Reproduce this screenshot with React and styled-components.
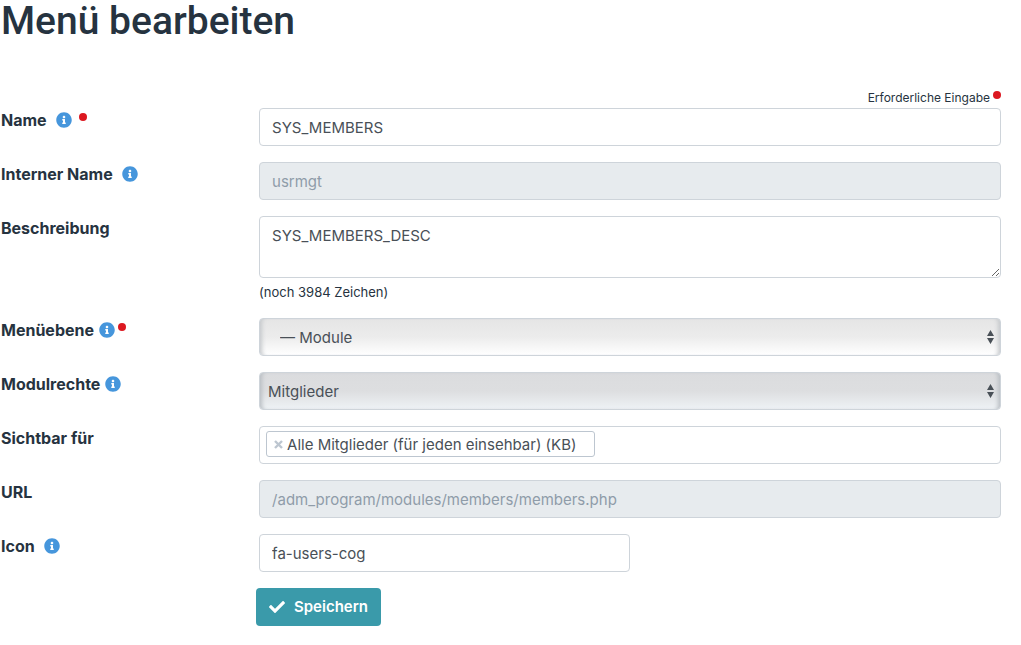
import React, { useState } from "react";
import styled, { createGlobalStyle } from "styled-components";
import { FaCheck, FaInfoCircle } from "react-icons/fa";

const GlobalStyle = createGlobalStyle`
  *, *::before, *::after { box-sizing: border-box; }
  body {
    margin: 0;
    background: #fff;
    color: #263340;
    font-family: Inter, "Liberation Sans", sans-serif;
    font-size: 15px;
    line-height: 24px;
  }
  input, select, textarea, button { font: inherit; }
`;

const Page = styled.main`
  padding: 0 20px 20px 1px;
`;

const Title = styled.h1`
  margin: 0 0 46px;
  font-family: Roboto, "Liberation Sans", sans-serif;
  font-size: 39px;
  font-weight: 500;
  line-height: 42px;
`;

const Form = styled.form`
  display: flex;
  flex-direction: column;
  gap: 16px;
`;

const Legend = styled.div`
  display: flex;
  justify-content: flex-end;
  align-items: center;
  gap: 3px;
  margin-bottom: -16px;
  font-size: 12px;
  line-height: 20px;
`;

const Dot = styled.span`
  flex: none;
  width: 8px;
  height: 8px;
  margin-bottom: 6px;
  border-radius: 50%;
  background: #dc1820;
`;

const Row = styled.div`
  display: grid;
  grid-template-columns: 8fr 23fr;
  align-items: start;
`;

const LabelCell = styled.div`
  display: flex;
  align-items: center;
  height: 24px;
`;

const Label = styled.label`
  font-size: 16px;
  font-weight: 700;
`;

const InfoIcon = styled(FaInfoCircle)`
  width: 16px;
  height: 16px;
  margin-left: ${(p) => (p.$tight ? 5 : 9)}px;
  margin-right: ${(p) => (p.$tight ? 3 : 7)}px;
  color: #4696dc;
`;

const Input = styled.input`
  display: block;
  width: ${(p) => (p.$half ? "50%" : "100%")};
  height: 38px;
  padding: 6px 12px;
  border: 1px solid #ced4da;
  border-radius: 4px;
  background: #fff;
  color: #495057;
  outline: 0;

  &:disabled {
    background: #e7ebee;
    color: #8f9ca9;
  }
`;

const TextArea = styled.textarea`
  display: block;
  width: 100%;
  height: 62px;
  padding: 7px 12px;
  border: 1px solid #ced4da;
  border-radius: 4px;
  background: #fff;
  color: #495057;
  resize: vertical;
  outline: 0;
`;

const Counter = styled.div`
  padding-top: 4px;
  font-size: 13px;
  line-height: 20px;
`;

const SelectWrap = styled.div`
  position: relative;
`;

const Select = styled.select`
  display: block;
  appearance: none;
  width: 100%;
  height: 38px;
  padding: 2px 24px 0 ${(p) => (p.$indent ? 20 : 8)}px;
  border: 1px solid #ced4da;
  border-radius: 4px;
  background: ${(p) =>
    p.$shaded
      ? "linear-gradient(#dbdcde 0%, #dddee0 50%, #eef2f5 100%)"
      : "linear-gradient(#e5e5e5 0%, #ececec 50%, #ffffff 100%)"};
  box-shadow: ${(p) =>
    p.$shaded
      ? "inset 5px 0 4px -3px #b9bec3, inset -5px 0 4px -3px #b9bec3"
      : "inset 5px 0 4px -3px #c6c9cc, inset -5px 0 4px -3px #c6c9cc"};
  color: #495057;
  outline: 0;
`;

const Arrows = styled.svg`
  position: absolute;
  top: 12px;
  right: 7px;
  width: 7px;
  height: 14px;
  pointer-events: none;
  fill: #495057;
`;

const TagBox = styled.div`
  display: flex;
  align-items: flex-start;
  height: 38px;
  padding: 4px 6px;
  border: 1px solid #ced4da;
  border-radius: 4px;
`;

const Tag = styled.div`
  display: flex;
  align-items: center;
  gap: 4px;
  height: 26px;
  padding: 1px 18px 0 7px;
  border: 1px solid #bdc6d0;
  border-radius: 3px;
  color: #495057;
`;

const RemoveButton = styled.button`
  display: flex;
  padding: 0;
  border: 0;
  background: none;
  color: #bdc6d0;

  svg {
    width: 9px;
    height: 9px;
  }
`;

const Actions = styled.div`
  padding-left: 25.5%;
`;

const SaveButton = styled.button`
  display: flex;
  align-items: center;
  gap: 9px;
  height: 38px;
  padding: 0 13px;
  border: 0;
  border-radius: 4px;
  background: #3a9aaa;
  color: #fff;
  font-weight: 600;

  svg {
    width: 16px;
    height: 16px;
  }
`;

function Field({ id, label, info, tight, required, children }) {
  return (
    <Row>
      <LabelCell>
        <Label htmlFor={id}>{label}</Label>
        {info && <InfoIcon $tight={tight} aria-hidden="true" />}
        {required && <Dot />}
      </LabelCell>
      <div>{children}</div>
    </Row>
  );
}

function SelectField({ id, option, indent, shaded }) {
  return (
    <SelectWrap>
      <Select id={id} $indent={indent} $shaded={shaded}>
        <option>{option}</option>
      </Select>
      <Arrows viewBox="0 0 7 14" aria-hidden="true">
        <path d="M3.5 0L7 6H0zM3.5 14L0 8h7z" />
      </Arrows>
    </SelectWrap>
  );
}

export default function App() {
  const [name, setName] = useState("SYS_MEMBERS");
  const [description, setDescription] = useState("SYS_MEMBERS_DESC");
  const [icon, setIcon] = useState("fa-users-cog");

  return (
    <>
      <GlobalStyle />
      <Page>
        <Title>Menü bearbeiten</Title>
        <Form onSubmit={(e) => e.preventDefault()}>
          <Legend>
            Erforderliche Eingabe
            <Dot />
          </Legend>
          <Field id="name" label="Name" info required>
            <Input id="name" value={name} onChange={(e) => setName(e.target.value)} />
          </Field>
          <Field id="internal" label="Interner Name" info>
            <Input id="internal" value="usrmgt" disabled />
          </Field>
          <Field id="description" label="Beschreibung">
            <TextArea
              id="description"
              value={description}
              onChange={(e) => setDescription(e.target.value)}
            />
            <Counter>(noch {4000 - description.length} Zeichen)</Counter>
          </Field>
          <Field id="level" label="Menüebene" info tight required>
            <SelectField id="level" option="— Module" indent />
          </Field>
          <Field id="rights" label="Modulrechte" info tight>
            <SelectField id="rights" option="Mitglieder" shaded />
          </Field>
          <Field id="visible" label="Sichtbar für">
            <TagBox>
              <Tag>
                <RemoveButton id="visible" type="button">
                  <svg viewBox="0 0 9 9" aria-hidden="true">
                    <path d="M1 1l7 7M8 1L1 8" stroke="currentColor" strokeWidth="2.4" />
                  </svg>
                </RemoveButton>
                Alle Mitglieder (für jeden einsehbar) (KB)
              </Tag>
            </TagBox>
          </Field>
          <Field id="url" label="URL">
            <Input id="url" value="/adm_program/modules/members/members.php" disabled />
          </Field>
          <Field id="icon" label="Icon" info>
            <Input id="icon" $half value={icon} onChange={(e) => setIcon(e.target.value)} />
          </Field>
          <Actions>
            <SaveButton type="submit">
              <FaCheck aria-hidden="true" />
              Speichern
            </SaveButton>
          </Actions>
        </Form>
      </Page>
    </>
  );
}
